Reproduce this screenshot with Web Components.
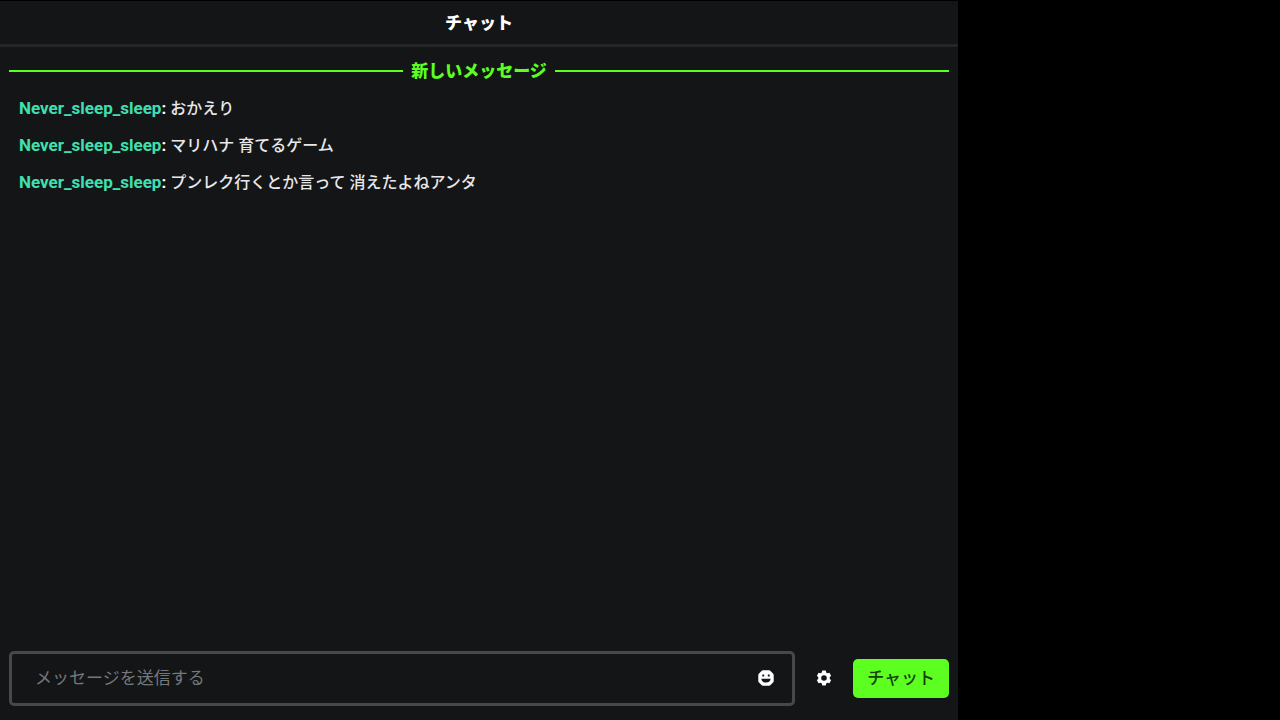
<!DOCTYPE html>
<html lang="ja">
<head>
<meta charset="utf-8">
<meta name="viewport" content="width=device-width, initial-scale=1">
<title>チャット</title>
<style>
  html, body { height: 100%; margin: 0; background: #000; }
  body { font-family: Roboto, "Noto Sans CJK JP", sans-serif; color: #e8e8ea; }
</style>
</head>
<body>
<chat-panel heading="チャット">
  <new-divider>新しいメッセージ</new-divider>
  <chat-message user="Never_sleep_sleep">おかえり</chat-message>
  <chat-message user="Never_sleep_sleep">マリハナ 育てるゲーム</chat-message>
  <chat-message user="Never_sleep_sleep">プンレク行くとか言って 消えたよねアンタ</chat-message>
  <chat-composer slot="composer"></chat-composer>
</chat-panel>
<script>
const define = (name, html, setup) => customElements.define(name, class extends HTMLElement {
  connectedCallback() {
    if (this.shadowRoot) return;
    const root = this.attachShadow({ mode: "open" });
    root.innerHTML = html;
    if (setup) setup(this, root);
  }
});

define("chat-panel", `
  <style>
    :host { display: grid; grid-template-columns: minmax(0, 1fr) 322px; height: 100vh; box-sizing: border-box; padding-top: 1px; }
    section { display: flex; flex-direction: column; min-width: 0; min-height: 0; background: #141517; }
    header { flex: none; height: 43px; display: flex; align-items: center; justify-content: center; border-bottom: 3px solid #242528; }
    h1 { margin: 0; font-size: 17px; line-height: 24px; font-weight: 800; color: #fff; }
    .log { flex: 1; min-height: 0; overflow: hidden; padding: 12px 9px 0; }
  </style>
  <section>
    <header><h1></h1></header>
    <div class="log" role="log"><slot></slot></div>
    <slot name="composer"></slot>
  </section>`,
  (host, root) => { root.querySelector("h1").textContent = host.getAttribute("heading"); });

define("new-divider", `
  <style>
    :host { display: flex; align-items: center; gap: 8px; margin-bottom: 7px; height: 24px; color: #5cff1f; font-size: 17px; line-height: 24px; font-weight: 800; }
    :host::before, :host::after { content: ""; flex: 1; height: 2px; background: #5cff1f; }
  </style>
  <slot></slot>`);

define("chat-message", `
  <style>
    :host { display: block; padding: 6px 10px; font-size: 16px; line-height: 24px; font-weight: 500; }
    b { font-size: 17px; font-weight: 700; color: #fff; }
    .user { color: #3fe0b0; }
  </style>
  <b><span class="user"></span>:</b> <slot></slot>`,
  (host, root) => { root.querySelector(".user").textContent = host.getAttribute("user"); });

define("chat-composer", `
  <style>
    :host { display: block; padding: 0 9px 14px; }
    form { display: flex; align-items: center; gap: 21px; margin: 0; }
    .field { flex: 1; min-width: 0; height: 55px; box-sizing: border-box; display: flex; align-items: center; padding: 0 18px 0 23px; border: 3px solid #47484c; border-radius: 5px; }
    input { flex: 1; min-width: 0; padding: 0 0 2px; border: 0; outline: 0; background: none; color: #efeff1; font: 400 17px/24px Roboto, "Noto Sans CJK JP", sans-serif; }
    input::placeholder { color: #74787b; opacity: 1; }
    button { flex: none; padding: 0; border: 0; background: none; color: #fff; font-family: inherit; cursor: pointer; }
    .icon { display: flex; width: 16px; height: 18px; padding-bottom: 2px; box-sizing: border-box; }
    svg { display: block; width: 16px; height: 16px; }
    .send { height: 39px; padding: 0 14px 2px; border-radius: 5px; background: #5cff1f; color: #14420a; font-size: 17px; line-height: 24px; font-weight: 500; }
  </style>
  <form onsubmit="return false">
    <div class="field">
      <input type="text" aria-label="メッセージ" placeholder="メッセージを送信する">
      <button class="icon" type="button" aria-label="絵文字">
        <svg viewBox="0 0 16 16" aria-hidden="true"><path fill="currentColor" fill-rule="evenodd" d="M5 0.300h6Q12 .3 12.500 1L15 3.500Q15.700 4 15.700 5v6Q15.700 12 15 12.500L12.500 15Q12 15.700 11 15.700H5Q4 15.700 3.500 15L1 12.500Q.3 12 .3 11V5Q.3 4 1 3.500L3.500 1Q4 .3 5 .3ZM4.300 4.600v2h1.900v-2ZM9.800 4.600v2h1.900v-2ZM3.300 8.800C3.800 11.600 5.400 12.600 8 12.600S12.200 11.600 12.700 8.800Z"/></svg>
      </button>
    </div>
    <button class="icon" type="button" aria-label="設定">
      <svg viewBox="0 0 16 16" aria-hidden="true"><path fill="currentColor" fill-rule="evenodd" d="M6.300 .5h3.400l.5 2.100 1.200.7 2-.6 1.700 3L13.700 7.200v1.600L15.100 10.300l-1.700 3-2-.6-1.200.7-.5 2.100H6.300l-.5-2.100-1.200-.7-2 .6L.9 10.300 2.300 8.800V7.200L.9 5.700l1.700-3 2 .6 1.200-.7ZM8 5.200a2.800 2.800 0 1 0 0 5.600a2.800 2.800 0 0 0 0-5.600Z"/></svg>
    </button>
    <button class="send" type="submit">チャット</button>
  </form>`);
</script>
</body>
</html>
